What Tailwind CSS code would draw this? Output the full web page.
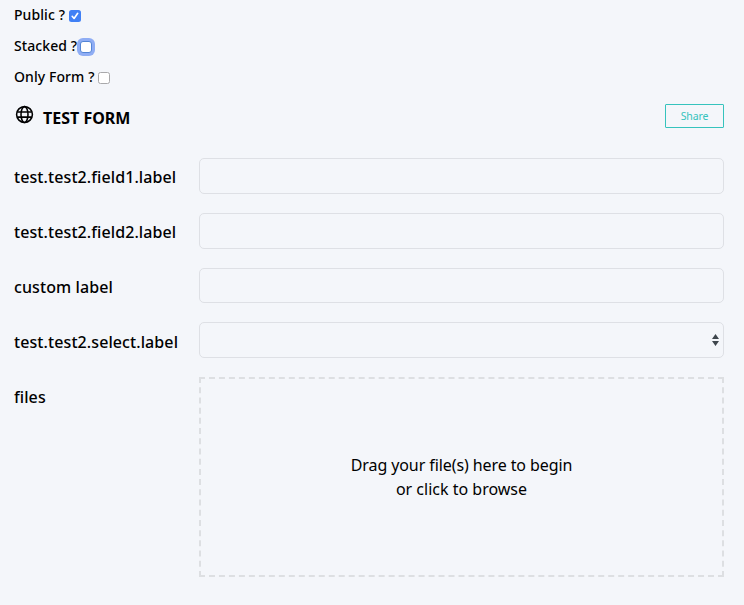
<!DOCTYPE html>
<html lang="en">
<head>
<meta charset="utf-8">
<title>Test form</title>
<script src="https://cdn.jsdelivr.net/npm/@tailwindcss/browser@4"></script>
</head>
<body class="h-[605px] overflow-hidden bg-[#f4f6fa] pl-[14px] pr-5 font-['Noto_Sans','Open_Sans',sans-serif] text-base text-black">
  <div class="-mt-px pb-px text-sm font-medium tracking-[0.08px]">
    <label class="flex h-[31px] items-center">Public ?
      <input type="checkbox" checked class="peer sr-only">
      <span class="mt-[2px] ml-[4px] flex size-3 items-center justify-center rounded-[2.5px] bg-[#4080f5]">
        <svg class="size-3" viewBox="0 0 12 12" fill="none" stroke="#fff" stroke-width="1.6" stroke-linecap="round" stroke-linejoin="round"><path d="M3.2 6.3 5.1 8.5 8.7 3.3"/></svg>
      </span>
    </label>
    <label class="flex h-[31px] items-center">Stacked ?
      <span class="mt-[2px] ml-[3px] size-3 rounded-[3px] border border-[#5385d6] bg-white ring-3 ring-[#8fadf4]"></span>
    </label>
    <label class="flex h-[31px] items-center">Only Form ?
      <span class="mt-[2px] ml-[4px] size-3 rounded-[2.5px] border border-[#a9a9ab] bg-white"></span>
    </label>
  </div>
  <header class="flex h-[65px] items-start">
    <svg class="mt-[12px] ml-px size-[19px]" viewBox="0 0 19 19" fill="none" stroke="#000" stroke-width="1.55"><circle cx="9.5" cy="9.5" r="7.9"/><ellipse cx="9.5" cy="9.5" rx="3.5" ry="7.9"/><path d="M2.2 6.9h14.6M2.2 12.1h14.6"/></svg>
    <h1 class="mt-[13px] ml-[9px] text-base leading-6 font-bold">TEST FORM</h1>
    <button class="mt-[11px] ml-auto h-6 w-[59px] rounded-[1px] border border-[#36c3bd] pt-px text-[10.5px] leading-none tracking-[-0.1px] text-[#36c3bd]">Share</button>
  </header>
  <form class="grid grid-cols-[185px_1fr] font-medium tracking-[0.09px]">
    <label class="h-[55px] pt-[7px]">test.test2.field1.label</label>
    <input class="h-9 rounded-[5px] border border-[#dee0e5]">
    <label class="h-[55px] pt-[7px]">test.test2.field2.label</label>
    <input class="h-9 rounded-[5px] border border-[#dee0e5]">
    <label class="h-[54px] pt-[7px]">custom label</label>
    <input class="h-[35px] rounded-[5px] border border-[#dee0e5]">
    <label class="h-[55px] pt-[8px]">test.test2.select.label</label>
    <div class="flex h-9 items-center justify-end rounded-[5px] border border-[#dee0e5] pr-1">
      <svg class="h-[14px] w-[7px]" viewBox="0 0 7 14" fill="#3f464d"><path d="M0 6 3.5 1 7 6zM0 8h7l-3.5 5z"/></svg>
    </div>
    <label class="pt-2">files</label>
    <div class="flex h-[200px] items-center justify-center border-2 border-dashed border-[#dddfe2] text-center leading-6 font-normal tracking-normal"><p><span class="tracking-[-0.09px]">Drag your file(s) here to begin</span><br>or click to browse</p></div>
  </form>
</body>
</html>
